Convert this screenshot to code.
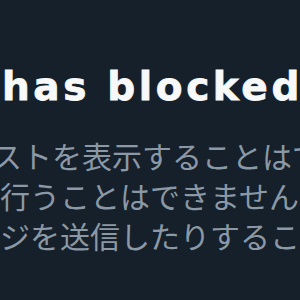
export default function App() {
  return (
    <div className="w-[300px] h-[300px] overflow-hidden bg-[#15202b]">
      <div className="pt-[63px] w-[600px]">
        <h2
          className="pl-[2px] whitespace-nowrap text-[39px] leading-[48px] font-bold tracking-[3.6px] text-[#f7f9f9] [-webkit-text-stroke:0.8px_#f7f9f9]"
          style={{ fontFamily: '"DejaVu Sans", sans-serif' }}
        >
          has blocked you
        </h2>
        <div
          className="mt-[24px] text-[30px] leading-[40px] text-[#8b98a5] whitespace-nowrap"
          style={{ fontFamily: '"Noto Sans CJK JP", sans-serif' }}
        >
          <p className="-ml-[8px]">ストを表示することはできません。</p>
          <p>行うことはできません。</p>
          <p>ジを送信したりすることはできません。</p>
        </div>
      </div>
    </div>
  );
}
